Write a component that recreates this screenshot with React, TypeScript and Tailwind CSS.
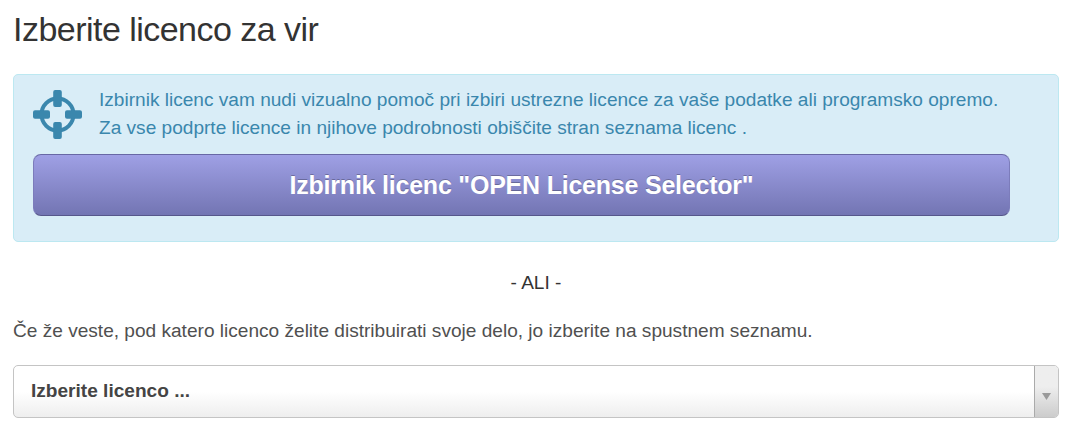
export default function App() {
  return (
    <main className="h-[433px] w-[1075px] overflow-hidden bg-white pl-[13px] pr-4 pt-[6px] font-['Liberation_Sans',Arial,sans-serif] text-[19.09px] leading-7 text-[#505050]">
      <h1 className="h-[68px] whitespace-nowrap text-[34px] leading-[46px] tracking-[-0.53px] text-[#333]">Izberite licenco za vir</h1>
      <section className="h-[168px] rounded-[5px] border border-[#bce8f1] bg-[#d9edf7] pl-[19px] pr-12 pt-[11px] text-[#3a87ad]">
        <div className="flex h-[68px]">
          <svg className="mt-[4px] h-[49px] w-[49px] shrink-0" viewBox="0 0 49 49" fill="#3a87ad">
            <circle cx="24.5" cy="24.5" r="16" fill="none" stroke="#3a87ad" strokeWidth="4" />
            <rect x="20.2" y="0" width="8.6" height="17" rx="2" />
            <rect x="20.2" y="32" width="8.6" height="17" rx="2" />
            <rect x="0" y="20.2" width="17" height="8.6" rx="2" />
            <rect x="32" y="20.2" width="17" height="8.6" rx="2" />
          </svg>
          <p className="ml-[17px] whitespace-nowrap">
            Izbirnik licenc vam nudi vizualno pomoč pri izbiri ustrezne licence za vaše podatke ali programsko opremo.<br />
            Za vse podprte licence in njihove podrobnosti obiščite stran seznama licenc .
          </p>
        </div>
        <button className="block h-[62px] w-full rounded-[8px] border border-x-[#7c7cbb] border-b-[#57578b] border-t-[#6868a5] bg-linear-to-b from-[#9fa0e5] to-[#7375b3] text-[25px] font-bold tracking-[-0.22px] text-white [text-shadow:0_-1px_0_rgba(0,0,0,0.25)]">Izbirnik licenc "OPEN License Selector"</button>
      </section>
      <p className="mt-[27px] text-center text-[#333]">- ALI -</p>
      <p className="mt-5 whitespace-nowrap">Če že veste, pod katero licenco želite distribuirati svoje delo, jo izberite na spustnem seznamu.</p>
      <div className="mt-5 flex h-[53px] overflow-hidden rounded-[5px] border border-[#c4c4c4] bg-linear-to-b from-white from-50% to-[#eee] font-bold text-[#444]">
        <span className="flex-1 pl-[17px] pt-[11px]">Izberite licenco ...</span>
        <span className="flex w-[24px] items-center justify-center border-l border-[#aaa] bg-linear-to-b from-[#eee] from-40% to-[#ccc]">
          <svg className="mt-[10px] h-[7px] w-[9px]" viewBox="0 0 9 7" fill="#999"><path d="M0 0h9L4.5 7z" /></svg>
        </span>
      </div>
    </main>
  );
}
